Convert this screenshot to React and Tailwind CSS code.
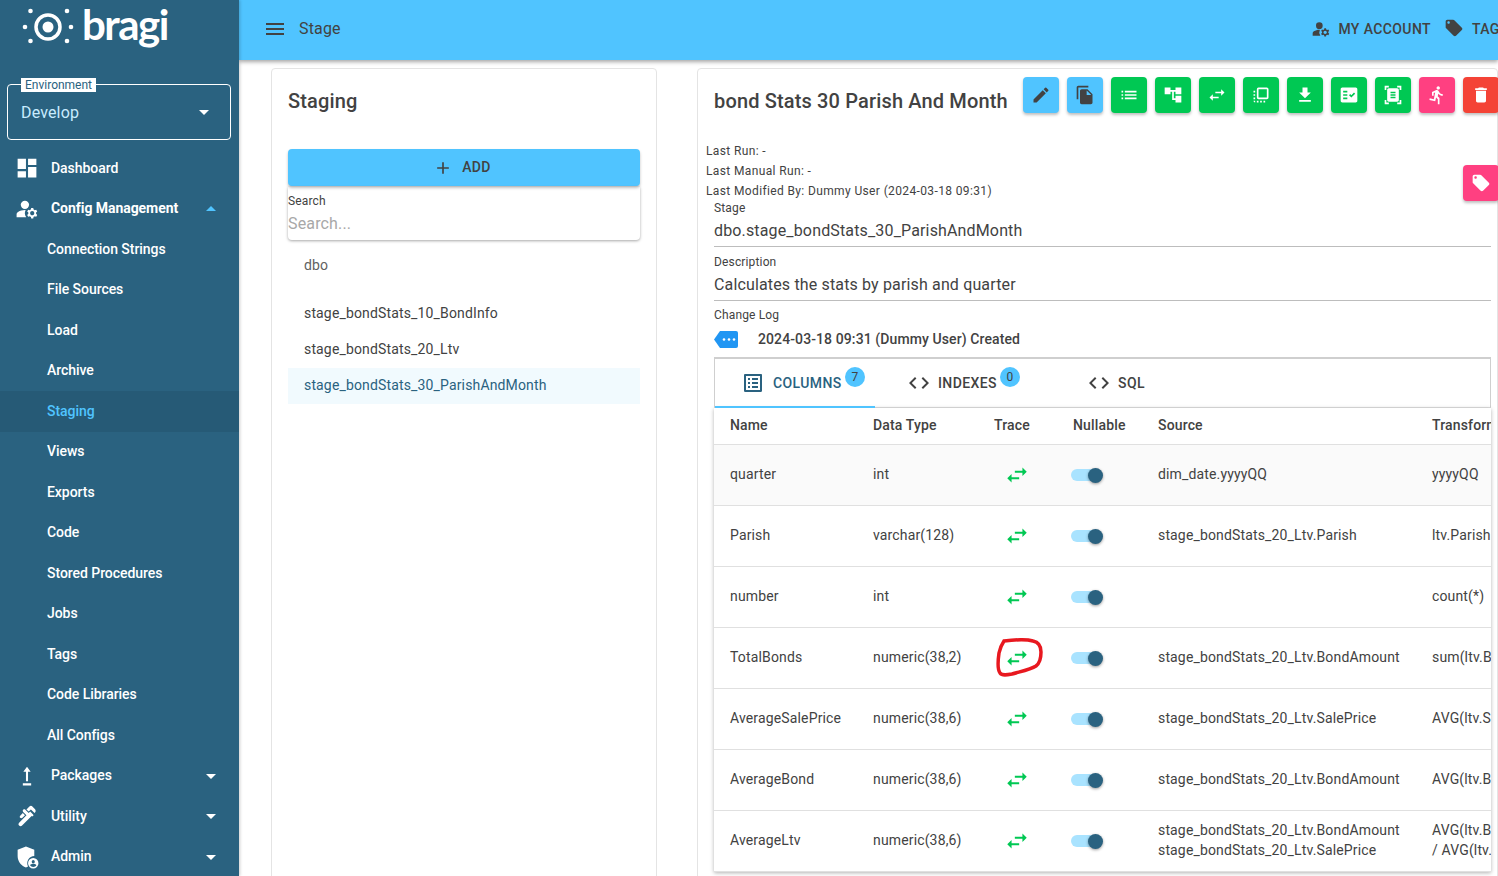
import React from "react";
import {
  MdDashboard, MdManageAccounts, MdArrowDropDown, MdArrowDropUp, MdPlumbing, MdMenu, MdLocalOffer, MdEdit, MdFileCopy,
  MdList, MdAccountTree, MdSwapHoriz, MdFlipToFront, MdFileDownload, MdFactCheck, MdDocumentScanner, MdDirectionsRun,
  MdDelete, MdAdd, MdListAlt, MdCode,
} from "react-icons/md";

const Upload = ({ className }) => (
  <svg viewBox="0 0 24 24" className={className} fill="currentColor"><path d="M8 21h8v-2H8v2zM12 3 8.500 8H11v9h2V8h2.500L12 3z" /></svg>
);
const Shield = ({ className }) => (
  <svg viewBox="0 0 24 24" className={className} fill="currentColor">
    <path d="M11 2 3 5v6c0 5 3.400 9.700 8 11 .7-.2 1.400-.5 2-.8A7 7 0 0 1 19 11V5l-8-3z" />
    <path fillRule="evenodd" d="M18 13a5 5 0 1 0 0 10 5 5 0 0 0 0-10zm0 2a1.500 1.500 0 1 1 0 3 1.500 1.500 0 0 1 0-3zm0 6.500c-1.300 0-2.400-.6-3-1.500.1-.9 2-1.400 3-1.400s2.900.5 3 1.400c-.6.900-1.700 1.500-3 1.500z" />
  </svg>
);

const subItems = ["Connection Strings", "File Sources", "Load", "Archive", "Staging", "Views", "Exports", "Code", "Stored Procedures", "Jobs", "Tags", "Code Libraries", "All Configs"];

const NavTop = ({ icon: I, label, caret, bold }) => (
  <div className={`flex h-[40.5px] shrink-0 items-center pl-[17px] pr-[16px] text-white text-[14px] tracking-[-0.05px] ${bold ? "font-bold" : "font-medium"}`}>
    <I className="w-[20px] h-[20px] shrink-0 scale-125" />
    <span className="ml-[14px] flex-1">{label}</span>
    {caret === "down" && <MdArrowDropDown className="w-[24px] h-[24px] text-white" />}
    {caret === "up" && <MdArrowDropUp className="w-[24px] h-[24px] text-[#50c4ff]" />}
  </div>
);

const Sidebar = () => (
  <aside className="w-[239px] shrink-0 h-full bg-[#2a6280] flex flex-col z-20 shadow-[1px_0_3px_rgba(0,0,0,0.2)]">
    <div className="h-[84px] shrink-0 flex items-start pl-[21px] relative">
      <svg viewBox="0 0 54 54" className="w-[54px] h-[54px] shrink-0 text-white" fill="currentColor">
        <circle cx="27" cy="27" r="12" fill="none" stroke="currentColor" strokeWidth="3.500" />
        <circle cx="27" cy="27" r="5.500" />
        <circle cx="4" cy="27" r="2.300" /><circle cx="50" cy="27" r="2.300" />
        <circle cx="9.500" cy="11" r="2.300" /><circle cx="46" cy="11" r="2.300" />
        <circle cx="9.500" cy="41" r="2.300" /><circle cx="46" cy="41" r="2.300" />
      </svg>
      <span className="ml-[7px] -mt-[3px] text-white font-['Lato',sans-serif] font-bold text-[42px] leading-[54px] tracking-[-1.5px]">bragi</span>
    </div>
    <div className="ml-[7px] w-[224px] h-[56px] shrink-0 rounded-[4px] border border-white relative flex items-center pl-[13px] pr-[14px]">
      <span className="absolute left-[13px] -top-[7px] bg-white text-[#2a6280] text-[12px] leading-[14px] px-[4px]">Environment</span>
      <span className="flex-1 text-[16px] tracking-[0.15px] text-[#c8ecff] mt-[1px]">Develop</span>
      <MdArrowDropDown className="w-[24px] h-[24px] text-white" />
    </div>
    <div className="h-[8.200px] shrink-0" />
    <NavTop icon={MdDashboard} label="Dashboard" />
    <NavTop icon={MdManageAccounts} label="Config Management" caret="up" bold />
    {subItems.map((s) => (
      <div key={s} className={`h-[40.5px] shrink-0 flex items-center pl-[47px] text-[14px] font-medium tracking-[-0.05px] ${s === "Staging" ? "bg-[#265a76] text-[#50c4ff]" : "text-white"}`}>{s}</div>
    ))}
    <NavTop icon={Upload} label="Packages" caret="down" />
    <NavTop icon={MdPlumbing} label="Utility" caret="down" />
    <NavTop icon={Shield} label="Admin" caret="down" />
  </aside>
);

const Header = () => (
  <header className="h-[60px] shrink-0 bg-[#50c4ff] flex items-center pl-[24px] pb-[2px] text-[#424242] shadow-[0_2px_4px_rgba(0,0,0,0.35)] z-10 relative overflow-hidden">
    <MdMenu className="w-[24px] h-[24px]" />
    <span className="ml-[12px] text-[16px] tracking-[0.15px]">Stage</span>
    <div className="ml-auto flex items-center shrink-0 -mr-[40px] text-[14px] font-medium tracking-[0.4px]">
      <MdManageAccounts className="w-[20px] h-[20px]" />
      <span className="ml-[7px]">MY ACCOUNT</span>
      <MdLocalOffer className="w-[20px] h-[20px] ml-[13px] mb-[2px]" />
      <span className="ml-[8px] w-[66px]">TAGS</span>
    </div>
  </header>
);

const Left = () => (
  <section className="w-[386px] shrink-0 h-[900px] border border-[#e4e4e4] rounded-t-[4px] px-[16px] pt-[18px] bg-white text-[#424242] tracking-[0.15px]">
    <h2 className="text-[20px] leading-[28px] font-medium">Staging</h2>
    <button className="mt-[34px] w-full h-[37px] rounded-[4px] bg-[#50c4ff] flex items-center justify-center pr-[4px] text-[14px] font-medium tracking-[0.3px] shadow-[0_2px_3px_rgba(0,0,0,0.25)]">
      <MdAdd className="w-[20px] h-[20px]" /><span className="ml-[9px]">ADD</span>
    </button>
    <div className="mt-[1px] h-[53px] rounded-b-[4px] shadow-[0_1px_3px_rgba(0,0,0,0.35)]">
      <div className="text-[12px] leading-[14px] pt-[7px]">Search</div>
      <div className="text-[16px] leading-[20px] mt-[6px] text-[#a8a8a8]">Search...</div>
    </div>
    <div className="mt-[15px] pl-[16px] text-[14px] leading-[20px] text-[#616161]">dbo</div>
    <div className="mt-[21px] text-[14px]">
      <div className="h-[36px] flex items-center pl-[16px] pb-[2px]">stage_bondStats_10_BondInfo</div>
      <div className="h-[36px] flex items-center pl-[16px] pb-[2px]">stage_bondStats_20_Ltv</div>
      <div className="h-[36px] flex items-center pl-[16px] pb-[2px] bg-[#f1fafe] text-[#2a6280]">stage_bondStats_30_ParishAndMonth</div>
    </div>
  </section>
);

const btns = [
  [MdEdit, "bg-[#50c4ff] text-[#424242]"], [MdFileCopy, "bg-[#50c4ff] text-[#424242]"],
  [MdList, "bg-[#00c853] text-white"], [MdAccountTree, "bg-[#00c853] text-white"], [MdSwapHoriz, "bg-[#00c853] text-white"],
  [MdFlipToFront, "bg-[#00c853] text-white"], [MdFileDownload, "bg-[#00c853] text-white"], [MdFactCheck, "bg-[#00c853] text-white"],
  [MdDocumentScanner, "bg-[#00c853] text-white"], [MdDirectionsRun, "bg-[#ff4081] text-white"], [MdDelete, "bg-[#f44336] text-white"],
];

const rows = [
  ["quarter", "int", "dim_date.yyyyQQ", "yyyyQQ"],
  ["Parish", "varchar(128)", "stage_bondStats_20_Ltv.Parish", "ltv.Parish"],
  ["number", "int", "", "count(*)"],
  ["TotalBonds", "numeric(38,2)", "stage_bondStats_20_Ltv.BondAmount", "sum(ltv.BondAmount)"],
  ["AverageSalePrice", "numeric(38,6)", "stage_bondStats_20_Ltv.SalePrice", "AVG(ltv.SalePrice)"],
  ["AverageBond", "numeric(38,6)", "stage_bondStats_20_Ltv.BondAmount", "AVG(ltv.BondAmount)"],
  ["AverageLtv", "numeric(38,6)", "stage_bondStats_20_Ltv.BondAmount\nstage_bondStats_20_Ltv.SalePrice", "AVG(ltv.BondAmount)\n/ AVG(ltv.SalePrice)"],
];

const gridCols = "grid grid-cols-[143px_121px_79px_85px_274px_200px] pl-[16px] pb-[2px] items-center";

const Toggle = () => (
  <span className="relative block w-[31px] h-[12px] ml-[-2px] mt-[2px] rounded-full bg-[#a9e3ff]">
    <span className="absolute right-[-1px] -top-[1.500px] w-[15px] h-[15px] rounded-full bg-[#2a6280] shadow-[0_1px_3px_rgba(0,0,0,0.4)]" />
  </span>
);

const Field = ({ label, value }) => (
  <div className="mr-[6px] border-b border-[#bdbdbd]">
    <div className="text-[12px] leading-[14px]">{label}</div>
    <div className="text-[16px] leading-[24px] mt-[4px] pb-[3px]">{value}</div>
  </div>
);

const Right = () => (
  <section className="w-[801px] shrink-0 h-[900px] ml-[40px] border border-[#e4e4e4] rounded-t-[4px] bg-white text-[#424242] relative tracking-[0.15px]">
    <div className="flex items-start pl-[16px] pt-[8px] h-[64px]">
      <h2 className="text-[20px] leading-[28px] font-medium mt-[10px] w-[309px] shrink-0 whitespace-nowrap">bond Stats 30 Parish And Month</h2>
      <div className="flex gap-[8px] shrink-0">
        {btns.map(([I, c], i) => (
          <span key={i} className={`w-[36px] h-[36px] rounded-[4px] flex items-center justify-center shadow-[0_2px_3px_rgba(0,0,0,0.25)] ${c}`}><I className="w-[20px] h-[20px]" /></span>
        ))}
      </div>
    </div>
    <div className="pl-[8px] pt-[8px] text-[12px] leading-[20px] tracking-[0.37px]">
      <div>Last Run: -</div>
      <div>Last Manual Run: -</div>
      <div>Last Modified By: Dummy User (2024-03-18 09:31)</div>
    </div>
    <span className="absolute left-[765px] top-[96px] w-[36px] h-[36px] rounded-[4px] bg-[#ff4081] text-white flex items-center justify-center shadow-[0_2px_3px_rgba(0,0,0,0.25)]"><MdLocalOffer className="w-[20px] h-[20px]" /></span>
    <div className="pl-[16px]">
      <div className="flex flex-col gap-[8px]">
        <Field label="Stage" value="dbo.stage_bondStats_30_ParishAndMonth" />
        <Field label="Description" value="Calculates the stats by parish and quarter" />
      </div>
      <div className="text-[12px] leading-[14px] mt-[7px]">Change Log</div>
      <div className="flex items-center h-[20px] mt-[7px]">
        <svg viewBox="0 0 24 17" className="w-[24px] h-[17px] shrink-0" fill="#2196f3">
          <path d="M6 0h16a2 2 0 0 1 2 2v13a2 2 0 0 1-2 2H6L0 8.500z" />
          <circle cx="10" cy="8.500" r="1.300" fill="#fff" /><circle cx="15" cy="8.500" r="1.300" fill="#fff" /><circle cx="20" cy="8.500" r="1.300" fill="#fff" />
        </svg>
        <span className="ml-[20px] text-[14px] font-medium tracking-[0.1px]">2024-03-18 09:31 (Dummy User) Created</span>
      </div>
      <div className="mr-[6px] mt-[8px]">
        <div className="h-[51px] border-t-2 border-l border-r border-[#cfcfcf] border-b border-b-[#e0e0e0] flex text-[14px] font-medium tracking-[0.4px]">
          <div className="w-[160px] shrink-0 border-b-2 border-[#50c4ff] h-[49px] flex items-center pl-[26px] pt-[1px] text-[#2a6280] relative">
            <MdListAlt className="w-[24px] h-[24px]" /><span className="ml-[8px]">COLUMNS</span>
            <span className="absolute left-[130px] top-[8px] w-[20px] h-[20px] rounded-full bg-[#50c4ff] text-[#424242] text-[12px] font-normal flex items-center justify-center">7</span>
          </div>
          <div className="w-[180px] shrink-0 flex items-center pl-[32px] relative">
            <MdCode className="w-[24px] h-[24px]" /><span className="ml-[7px]">INDEXES</span>
            <span className="absolute left-[125px] top-[8px] w-[20px] h-[20px] rounded-full bg-[#50c4ff] text-[#424242] text-[12px] font-normal flex items-center justify-center">0</span>
          </div>
          <div className="flex items-center pl-[32px]">
            <MdCode className="w-[24px] h-[24px]" /><span className="ml-[7px]">SQL</span>
          </div>
        </div>
        <div className="overflow-hidden shadow-[0_1px_4px_rgba(0,0,0,0.3)] text-[14px]">
          <div className={`${gridCols} h-[37px] font-medium border-b border-[#e0e0e0]`}>
            <span>Name</span><span>Data Type</span><span>Trace</span><span>Nullable</span><span>Source</span><span className="whitespace-nowrap">Transform</span>
          </div>
          {rows.map((r, i) => (
            <div key={r[0]} className={`${gridCols} h-[61px] border-b border-[#e0e0e0] ${i === 0 ? "bg-[#fafafa]" : "bg-white"}`}>
              <span>{r[0]}</span>
              <span>{r[1]}</span>
              <span className="pl-[10px]"><MdSwapHoriz className="w-[26px] h-[26px] mt-[2px] text-[#00c853]" /></span>
              <span><Toggle /></span>
              <span className="whitespace-pre-line leading-[20px] text-[#424242]">{r[2]}</span>
              <span className="whitespace-pre leading-[20px]">{r[3]}</span>
            </div>
          ))}
        </div>
      </div>
    </div>
    <svg viewBox="0 0 48 40" className="absolute left-[298px] top-[569px] w-[48px] h-[40px] pointer-events-none" fill="none" stroke="#e8181f" strokeWidth="3.500" strokeLinecap="round">
      <path d="M8 3C16 2 30 1 37 3 42 4 45 8 45 14 45 20 44 25 40 28 34 32 22 34 16 36 11 37 6 38 4 35 1 31 2 22 3 15 4 10 6 6 8 3z" />
    </svg>
  </section>
);

export default function App() {
  return (
    <div className="w-[1498px] h-[876px] overflow-hidden flex font-['Roboto',sans-serif] bg-white">
      <Sidebar />
      <div className="flex-1 min-w-0 flex flex-col h-full">
        <Header />
        <main className="flex-1 min-h-0 flex pl-[32px] pt-[8px] overflow-hidden">
          <Left />
          <Right />
        </main>
      </div>
    </div>
  );
}
